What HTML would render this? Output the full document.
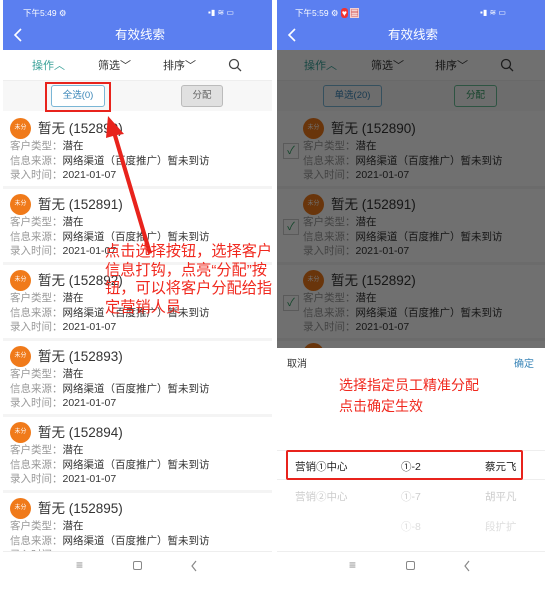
<!DOCTYPE html>
<html><head><meta charset="utf-8"><style>
*{margin:0;padding:0;box-sizing:border-box}
body{width:547px;height:591px;background:#fff;position:relative;overflow:hidden;font-family:"Liberation Sans","Noto Sans CJK SC",sans-serif;color:#333}
.ph{position:absolute;top:0;height:591px;background:#fff;overflow:hidden}
.a{position:absolute;white-space:nowrap;line-height:1.2}
.hdr{position:absolute;left:0;top:0;right:0;height:50px;background:#5b7ff0;color:#fff}
.av{position:absolute;width:21px;height:21px;border-radius:50%;background:#f07a1a;color:#fff;font-size:6px;text-align:center;line-height:21px}
.t{font-size:13.5px;color:#333}
.l{font-size:10.5px;color:#999}
.l b{font-weight:normal;color:#333}
.sep{position:absolute;left:0;right:0;height:3px;background:#f4f4f4}
.nav{position:absolute;left:0;right:0;height:40px;background:#fff;border-top:1px solid #eee}
.ck{position:absolute;width:16px;height:16px;border:1px solid #ccc;color:#2a9d60;font-size:11px;text-align:center;line-height:14px}
</style></head><body>

<!-- LEFT PHONE -->
<div class="ph" style="left:3px;width:269px">
 <div class="hdr">
  <div class="a" style="left:20px;top:8px;font-size:8.5px">下午5:49 ⚙</div>
  <div class="a" style="left:205px;top:8px;font-size:8px">▪▮ ≋ ▭</div>
  <svg class="a" style="left:10px;top:28px" width="10" height="14"><path d="M8 1 L2 7 L8 13" stroke="#fff" stroke-width="1.6" fill="none"/></svg>
  <div class="a" style="left:112px;top:28px;font-size:12.5px">有效线索</div>
 </div>
 <div class="a" style="left:29px;top:60px;font-size:11px;color:#3aa198">操作︿</div>
 <div class="a" style="left:95px;top:60px;font-size:11px">筛选﹀</div>
 <div class="a" style="left:160px;top:60px;font-size:11px">排序﹀</div>
 <svg class="a" style="left:225px;top:58px" width="14" height="14"><circle cx="6" cy="6" r="4.5" stroke="#444" stroke-width="1.3" fill="none"/><path d="M9.3 9.3 L13 13" stroke="#444" stroke-width="1.3"/></svg>
 <div class="a" style="left:0;top:80px;width:269px;height:31px;background:#f7f7f7;border-top:1px solid #eee"></div>
 <div class="a" style="left:48px;top:85px;width:54px;height:22px;border:1px solid #7ab6d6;border-radius:3px;background:#fff;font-size:9.5px;color:#3b86b8;text-align:center;line-height:20px">全选(0)</div>
 <div class="a" style="left:178px;top:85px;width:42px;height:22px;border:1px solid #bbb;border-radius:3px;background:#e0e0e0;font-size:9.5px;color:#666;text-align:center;line-height:20px">分配</div>
 <div class="a" style="left:42px;top:82px;width:66px;height:30px;border:2.5px solid #e8231c"></div>

 <div class="av" style="left:7px;top:118px">未分</div><div class="a t" style="left:35px;top:121px">暂无 (152890)</div>
 <div class="a l" style="left:7px;top:140px">客户类型：<b>潜在</b></div><div class="a l" style="left:7px;top:155px">信息来源：<b>网络渠道（百度推广）暂未到访</b></div><div class="a l" style="left:7px;top:169px">录入时间：<b>2021-01-07</b></div>
 <div class="sep" style="top:186px"></div>
 <div class="av" style="left:7px;top:194px">未分</div><div class="a t" style="left:35px;top:197px">暂无 (152891)</div>
 <div class="a l" style="left:7px;top:216px">客户类型：<b>潜在</b></div><div class="a l" style="left:7px;top:231px">信息来源：<b>网络渠道（百度推广）暂未到访</b></div><div class="a l" style="left:7px;top:245px">录入时间：<b>2021-01-07</b></div>
 <div class="sep" style="top:262px"></div>
 <div class="av" style="left:7px;top:270px">未分</div><div class="a t" style="left:35px;top:273px">暂无 (152892)</div>
 <div class="a l" style="left:7px;top:292px">客户类型：<b>潜在</b></div><div class="a l" style="left:7px;top:307px">信息来源：<b>网络渠道（百度推广）暂未到访</b></div><div class="a l" style="left:7px;top:321px">录入时间：<b>2021-01-07</b></div>
 <div class="sep" style="top:338px"></div>
 <div class="av" style="left:7px;top:346px">未分</div><div class="a t" style="left:35px;top:349px">暂无 (152893)</div>
 <div class="a l" style="left:7px;top:368px">客户类型：<b>潜在</b></div><div class="a l" style="left:7px;top:383px">信息来源：<b>网络渠道（百度推广）暂未到访</b></div><div class="a l" style="left:7px;top:397px">录入时间：<b>2021-01-07</b></div>
 <div class="sep" style="top:414px"></div>
 <div class="av" style="left:7px;top:422px">未分</div><div class="a t" style="left:35px;top:425px">暂无 (152894)</div>
 <div class="a l" style="left:7px;top:444px">客户类型：<b>潜在</b></div><div class="a l" style="left:7px;top:459px">信息来源：<b>网络渠道（百度推广）暂未到访</b></div><div class="a l" style="left:7px;top:473px">录入时间：<b>2021-01-07</b></div>
 <div class="sep" style="top:490px"></div>
 <div class="av" style="left:7px;top:498px">未分</div><div class="a t" style="left:35px;top:501px">暂无 (152895)</div>
 <div class="a l" style="left:7px;top:520px">客户类型：<b>潜在</b></div><div class="a l" style="left:7px;top:535px">信息来源：<b>网络渠道（百度推广）暂未到访</b></div><div class="a l" style="left:7px;top:549px">录入时间：<b>2021-01-07</b></div>
 <div class="nav" style="top:551px">
  <div class="a" style="left:73px;top:6px;font-size:12px;color:#888">≡</div>
  <div class="a" style="left:130px;top:9px;width:9px;height:9px;border:1.2px solid #888;border-radius:2px"></div>
  <svg class="a" style="left:187px;top:8px" width="8" height="12"><path d="M6 1 L2 6 L6 11" stroke="#888" stroke-width="1.2" fill="none"/></svg>
 </div>
 <svg class="a" style="left:0;top:0" width="269" height="300"><polygon points="105,116 121,134 114,135 149,253 145,254 110,136 103,138" fill="#e8231c"/></svg>
 <div class="a" style="left:102px;top:243px;font-size:15.2px;line-height:18.5px;color:#f0281e;white-space:normal;width:175px">点击选择按钮，选择客户信息打钩，点亮“分配”按钮，可以将客户分配给指定营销人员</div>
</div>

<!-- RIGHT PHONE -->
<div class="ph" style="left:277px;width:268px">
 <div class="hdr">
  <div class="a" style="left:18px;top:8px;font-size:8.5px">下午5:59 ⚙ <span style="background:#e33;border-radius:3px;padding:0 1px">♥</span> <span style="background:#f3d0d0;color:#c33">▤</span></div>
  <div class="a" style="left:203px;top:8px;font-size:8px">▪▮ ≋ ▭</div>
  <svg class="a" style="left:10px;top:28px" width="10" height="14"><path d="M8 1 L2 7 L8 13" stroke="#fff" stroke-width="1.6" fill="none"/></svg>
  <div class="a" style="left:111px;top:28px;font-size:12.5px">有效线索</div>
 </div>
 <div class="a" style="left:27px;top:60px;font-size:11px;color:#3aa198">操作︿</div>
 <div class="a" style="left:94px;top:60px;font-size:11px">筛选﹀</div>
 <div class="a" style="left:158px;top:60px;font-size:11px">排序﹀</div>
 <svg class="a" style="left:223px;top:58px" width="14" height="14"><circle cx="6" cy="6" r="4.5" stroke="#444" stroke-width="1.3" fill="none"/><path d="M9.3 9.3 L13 13" stroke="#444" stroke-width="1.3"/></svg>
 <div class="a" style="left:0;top:80px;width:268px;height:31px;background:#f7f7f7;border-top:1px solid #eee"></div>
 <div class="a" style="left:46px;top:85px;width:59px;height:22px;border:1px solid #7ab6d6;border-radius:3px;font-size:9.5px;color:#3b86b8;text-align:center;line-height:20px">单选(20)</div>
 <div class="a" style="left:177px;top:85px;width:43px;height:22px;border:1px solid #6abf96;border-radius:3px;font-size:9.5px;color:#2f9a62;text-align:center;line-height:20px">分配</div>
 <div class="av" style="left:26px;top:118px">未分</div><div class="a t" style="left:54px;top:121px">暂无 (152890)</div>
 <div class="ck" style="left:6px;top:143px">✓</div>
 <div class="a l" style="left:26px;top:140px">客户类型：<b>潜在</b></div><div class="a l" style="left:26px;top:155px">信息来源：<b>网络渠道（百度推广）暂未到访</b></div><div class="a l" style="left:26px;top:169px">录入时间：<b>2021-01-07</b></div>
 <div class="sep" style="top:186px"></div>
 <div class="av" style="left:26px;top:194px">未分</div><div class="a t" style="left:54px;top:197px">暂无 (152891)</div>
 <div class="ck" style="left:6px;top:219px">✓</div>
 <div class="a l" style="left:26px;top:216px">客户类型：<b>潜在</b></div><div class="a l" style="left:26px;top:231px">信息来源：<b>网络渠道（百度推广）暂未到访</b></div><div class="a l" style="left:26px;top:245px">录入时间：<b>2021-01-07</b></div>
 <div class="sep" style="top:262px"></div>
 <div class="av" style="left:26px;top:270px">未分</div><div class="a t" style="left:54px;top:273px">暂无 (152892)</div>
 <div class="ck" style="left:6px;top:295px">✓</div>
 <div class="a l" style="left:26px;top:292px">客户类型：<b>潜在</b></div><div class="a l" style="left:26px;top:307px">信息来源：<b>网络渠道（百度推广）暂未到访</b></div><div class="a l" style="left:26px;top:321px">录入时间：<b>2021-01-07</b></div>
 <div class="sep" style="top:338px"></div>
 <div class="av" style="left:26px;top:343px">未分</div>
 <div class="a" style="left:0;top:50px;width:268px;height:298px;background:rgba(0,0,0,0.56)"></div>
 <div class="a" style="left:0;top:348px;width:268px;height:243px;background:#fff"></div>
 <div class="a" style="left:10px;top:359px;font-size:10px;color:#333">取消</div>
 <div class="a" style="left:237px;top:359px;font-size:10px;color:#3b86b8">确定</div>
 <div class="a" style="left:62px;top:375px;font-size:14px;line-height:21px;color:#f0281e">选择指定员工精准分配<br>点击确定生效</div>
 <div class="a" style="left:0;top:450px;width:268px;height:30px;border-top:1px solid #eee;border-bottom:1px solid #eee"></div>
 <div class="a" style="left:18px;top:461px;font-size:10.5px;color:#222">营销①中心</div>
 <div class="a" style="left:124px;top:461px;font-size:10.5px;color:#222">①-2</div>
 <div class="a" style="left:208px;top:461px;font-size:10.5px;color:#222">蔡元飞</div>
 <div class="a" style="left:18px;top:491px;font-size:10.5px;color:#ccc">营销②中心</div>
 <div class="a" style="left:124px;top:491px;font-size:10.5px;color:#ccc">①-7</div>
 <div class="a" style="left:208px;top:491px;font-size:10.5px;color:#ccc">胡平凡</div>
 <div class="a" style="left:124px;top:521px;font-size:10.5px;color:#ddd">①-8</div>
 <div class="a" style="left:208px;top:521px;font-size:10.5px;color:#ddd">段扩扩</div>
 <div class="a" style="left:9px;top:450px;width:237px;height:30px;border:2.5px solid #e8231c;border-radius:2px"></div>
 <div class="nav" style="top:551px">
  <div class="a" style="left:72px;top:6px;font-size:12px;color:#888">≡</div>
  <div class="a" style="left:129px;top:9px;width:9px;height:9px;border:1.2px solid #888;border-radius:2px"></div>
  <svg class="a" style="left:186px;top:8px" width="8" height="12"><path d="M6 1 L2 6 L6 11" stroke="#888" stroke-width="1.2" fill="none"/></svg>
 </div>
</div>
</body></html>
